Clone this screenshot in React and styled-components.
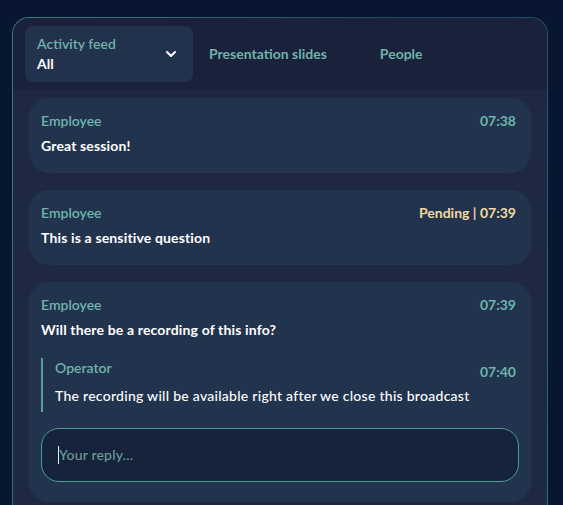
import React from "react";
import styled, { createGlobalStyle } from "styled-components";
import { ChevronDown } from "lucide-react";

const Global = createGlobalStyle`
  html, body { margin: 0; padding: 0; background: #081631; }
  body { font-family: "Lato", "Noto Sans", sans-serif; -webkit-font-smoothing: antialiased; }
`;

const Page = styled.div`
  padding: 17px 15px 0 12px;
  height: 505px;
  box-sizing: border-box;
  overflow: hidden;
`;

const Frame = styled.div`
  background: linear-gradient(100deg, #3f7a78 0%, #2a5a6a 40%, #1c3f5e 75%, #2f6f78 100%);
  border-radius: 17px 17px 0 0;
  padding: 1px 1px 0 1px;
  height: 100%;
  box-sizing: border-box;
`;

const Panel = styled.div`
  background: #1f2842;
  border-radius: 16px 16px 0 0;
  height: 100%;
  overflow: hidden;
  display: flex;
  flex-direction: column;
`;

const Header = styled.div`
  background: #1a213a;
  display: flex;
  align-items: center;
  padding: 8px 12px;
  height: 72px;
  box-sizing: border-box;
`;

const Dropdown = styled.div`
  width: 168px;
  height: 56px;
  box-sizing: border-box;
  background: #22324c;
  border-radius: 8px;
  padding: 9px 14px 9px 12px;
  display: flex;
  align-items: center;
  justify-content: space-between;
`;

const DropLabels = styled.div`
  display: flex;
  flex-direction: column;
  gap: 2px;
`;

const DropTitle = styled.span`
  color: #6fb3aa;
  font-size: 14px;
  font-weight: 600;
  line-height: 18px;
`;

const DropValue = styled.span`
  color: #ffffff;
  font-size: 14px;
  font-weight: 700;
  line-height: 18px;
`;

const Tabs = styled.div`
  display: flex;
  margin-left: 16px;
  margin-top: -1px;
  gap: 53px;
`;

const Tab = styled.span`
  color: #6fb3aa;
  font-size: 14px;
  font-weight: 700;
`;

const Feed = styled.div`
  display: flex;
  flex-direction: column;
  gap: 17px;
  padding: 8px 16px 16px;
`;

const Card = styled.div`
  background: #22334e;
  border-radius: 20px;
  padding: 13px 15px 17px 12px;
  display: flex;
  flex-direction: column;
`;

const Row = styled.div`
  display: flex;
  justify-content: space-between;
  align-items: center;
  line-height: 20px;
`;

const Name = styled.span`
  color: #6fb3aa;
  font-size: 14px;
  font-weight: 600;
`;

const Time = styled.span`
  color: ${(p) => (p.$pending ? "#f3d9a2" : "#6fb3aa")};
  font-size: 14px;
  font-weight: 700;
  ${(p) => (p.$low ? "transform: translateY(4px);" : "")}
`;

const Message = styled.div`
  color: #ffffff;
  font-size: 14px;
  font-weight: ${(p) => (p.$regular ? 500 : 700)};
  letter-spacing: ${(p) => (p.$regular ? "0.27px" : "0.15px")};
  line-height: 20px;
  margin-top: ${(p) => (p.$regular ? "8px" : "5px")};
`;

const Reply = styled.div`
  margin-top: 18px;
  border-left: 2px solid #5a9e96;
  padding: 0 0 6px 12px;
`;

const ReplyBox = styled.div`
  margin: 16px -3px 3px 0;
  height: 54px;
  box-sizing: border-box;
  border: 1px solid #4f9c93;
  border-radius: 18px;
  background: #16243b;
  display: flex;
  align-items: center;
  padding-left: 16px;
`;

const Placeholder = styled.span`
  color: #6a9c99;
  font-size: 14px;
  font-weight: 500;
  letter-spacing: 0.2px;
  border-left: 1px solid #e6eef0;
  line-height: 18px;
`;

export default function App() {
  return (
    <>
      <Global />
      <Page>
        <Frame>
          <Panel>
            <Header>
              <Dropdown>
                <DropLabels>
                  <DropTitle>Activity feed</DropTitle>
                  <DropValue>All</DropValue>
                </DropLabels>
                <ChevronDown size={16} color="#ffffff" strokeWidth={3} />
              </Dropdown>
              <Tabs>
                <Tab>Presentation slides</Tab>
                <Tab>People</Tab>
              </Tabs>
            </Header>
            <Feed>
              <Card>
                <Row>
                  <Name>Employee</Name>
                  <Time>07:38</Time>
                </Row>
                <Message>Great session!</Message>
              </Card>
              <Card>
                <Row>
                  <Name>Employee</Name>
                  <Time $pending>Pending | 07:39</Time>
                </Row>
                <Message>This is a sensitive question</Message>
              </Card>
              <Card>
                <Row>
                  <Name>Employee</Name>
                  <Time>07:39</Time>
                </Row>
                <Message>Will there be a recording of this info?</Message>
                <Reply>
                  <Row>
                    <Name>Operator</Name>
                    <Time $low>07:40</Time>
                  </Row>
                  <Message $regular>The recording will be available right after we close this broadcast</Message>
                </Reply>
                <ReplyBox>
                  <Placeholder>Your reply...</Placeholder>
                </ReplyBox>
              </Card>
            </Feed>
          </Panel>
        </Frame>
      </Page>
    </>
  );
}
